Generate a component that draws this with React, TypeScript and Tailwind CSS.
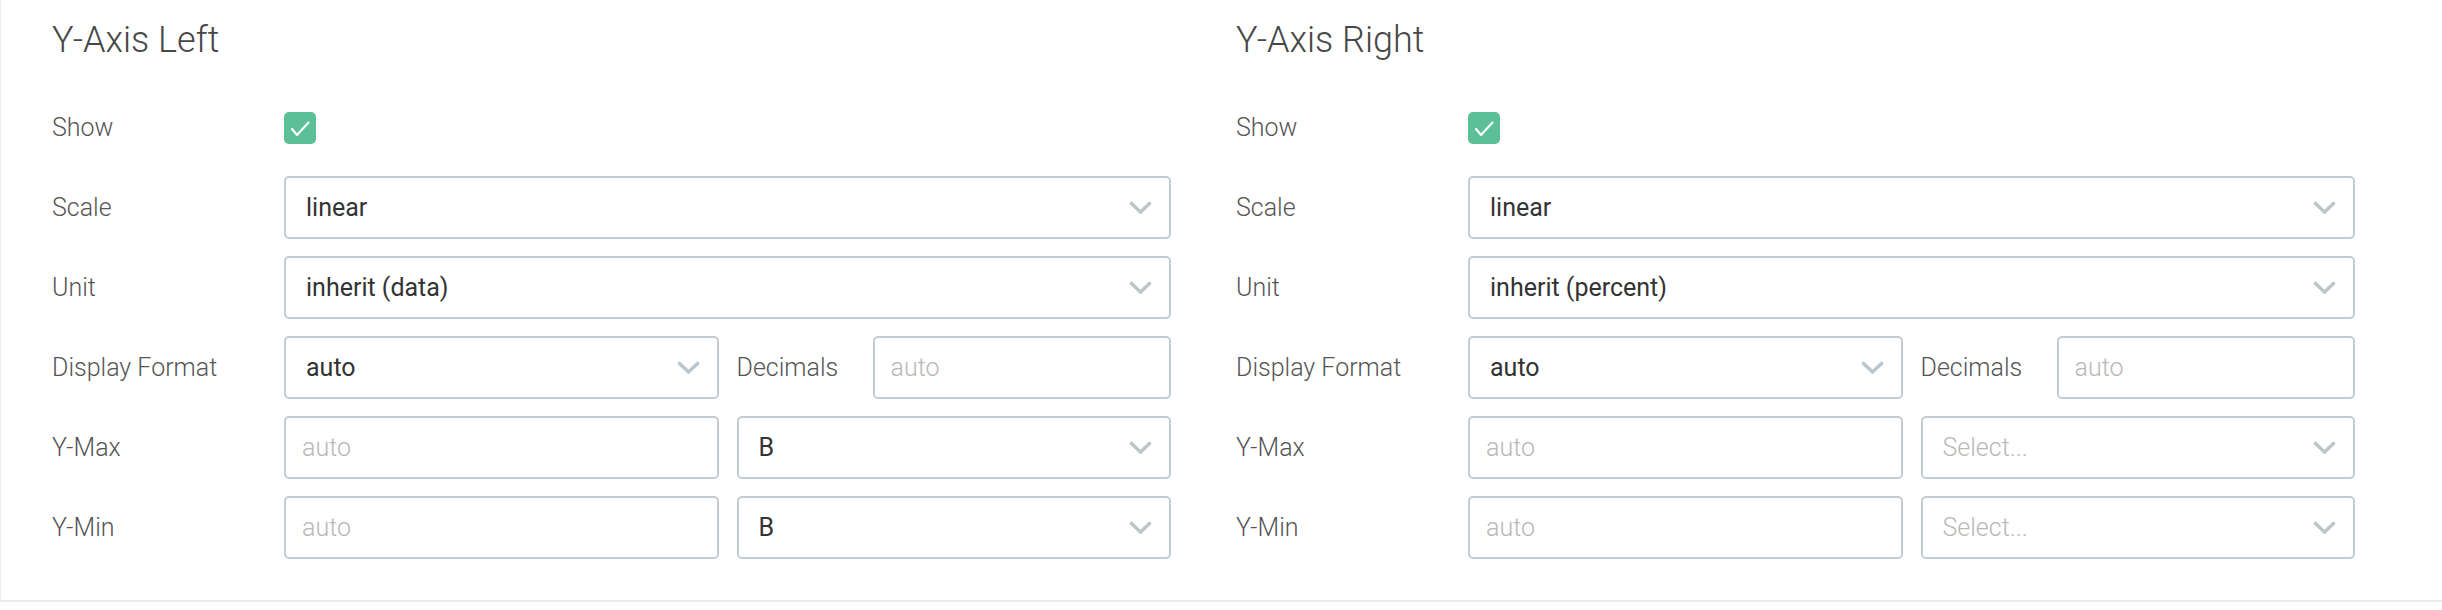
import React from "react";

function Chevron() {
  return (
    <svg width="23" height="14" viewBox="0 0 23 14" className="shrink-0">
      <polyline points="2.5,2.5 11.5,11 20.5,2.5" fill="none" stroke="#bcc6cd" strokeWidth="3.6" strokeLinecap="round" strokeLinejoin="round" />
    </svg>
  );
}

function Select({ value, placeholder }: { value?: string; placeholder?: string }) {
  return (
    <div className="w-full min-w-0 h-full border-2 border-[#c3ccd3] rounded-[5px] bg-white flex items-center justify-between pl-[20px] pr-[17px]">
      {value ? (
        <span className="text-[25px] text-[#333333] font-normal">{value}</span>
      ) : (
        <span className="text-[25px] text-[#b8b8b8] font-light">{placeholder}</span>
      )}
      <Chevron />
    </div>
  );
}

function Input({ placeholder }: { placeholder: string }) {
  return (
    <div className="w-full min-w-0 h-full border-2 border-[#c3ccd3] rounded-[5px] bg-white flex items-center pl-[16px]">
      <span className="text-[25px] text-[#b8b8b8] font-light">{placeholder}</span>
    </div>
  );
}

function Row({ label, split = false, children }: { label: string; split?: boolean; children: React.ReactNode }) {
  return (
    <div className="flex items-center h-[63px]">
      <div className="w-[232px] shrink-0 text-[25px] font-light text-[#555555]">{label}</div>
      {split ? (
        <div className="w-[887px] h-full grid grid-cols-2 gap-[18px]">{children}</div>
      ) : (
        <div className="w-[887px] h-full flex items-center">{children}</div>
      )}
    </div>
  );
}

function Checkbox() {
  return (
    <div className="w-[32px] h-[32px] rounded-[5px] bg-[#5bc095] flex items-center justify-center">
      <svg width="32" height="32" viewBox="0 0 32 32">
        <polyline points="8,17 13,23 24.5,10.5" fill="none" stroke="#ffffff" strokeWidth="2.2" strokeLinecap="round" strokeLinejoin="round" />
      </svg>
    </div>
  );
}

function Panel({ title, unit, right }: { title: string; unit: string; right: boolean }) {
  return (
    <div className="w-[1119px] shrink-0 flex flex-col">
      <h2 className="mt-[19px] h-[42px] leading-[42px] text-[36px] font-light text-[#474747]">{title}</h2>
      <div className="mt-[35px] flex flex-col gap-[17px]">
        <Row label="Show">
          <Checkbox />
        </Row>
        <Row label="Scale">
          <Select value="linear" />
        </Row>
        <Row label="Unit">
          <Select value={unit} />
        </Row>
        <Row label="Display Format" split>
          <Select value="auto" />
          <div className="min-w-0 h-full flex items-center">
            <div className="w-[136px] shrink-0 text-[25px] font-light text-[#555555]">Decimals</div>
            <Input placeholder="auto" />
          </div>
        </Row>
        <Row label="Y-Max" split>
          <Input placeholder="auto" />
          {right ? <Select placeholder="Select..." /> : <Select value="B" />}
        </Row>
        <Row label="Y-Min" split>
          <Input placeholder="auto" />
          {right ? <Select placeholder="Select..." /> : <Select value="B" />}
        </Row>
      </div>
    </div>
  );
}

export default function App() {
  return (
    <div className="w-[2442px] h-[610px] bg-white font-['Roboto','Liberation_Sans',sans-serif]">
      <div className="h-[602px] border-b-2 border-b-[#ececec] border-l border-l-[#eeeeee] flex pl-[51px] gap-[65px]">
        <Panel title="Y-Axis Left" unit="inherit (data)" right={false} />
        <Panel title="Y-Axis Right" unit="inherit (percent)" right={true} />
      </div>
    </div>
  );
}
